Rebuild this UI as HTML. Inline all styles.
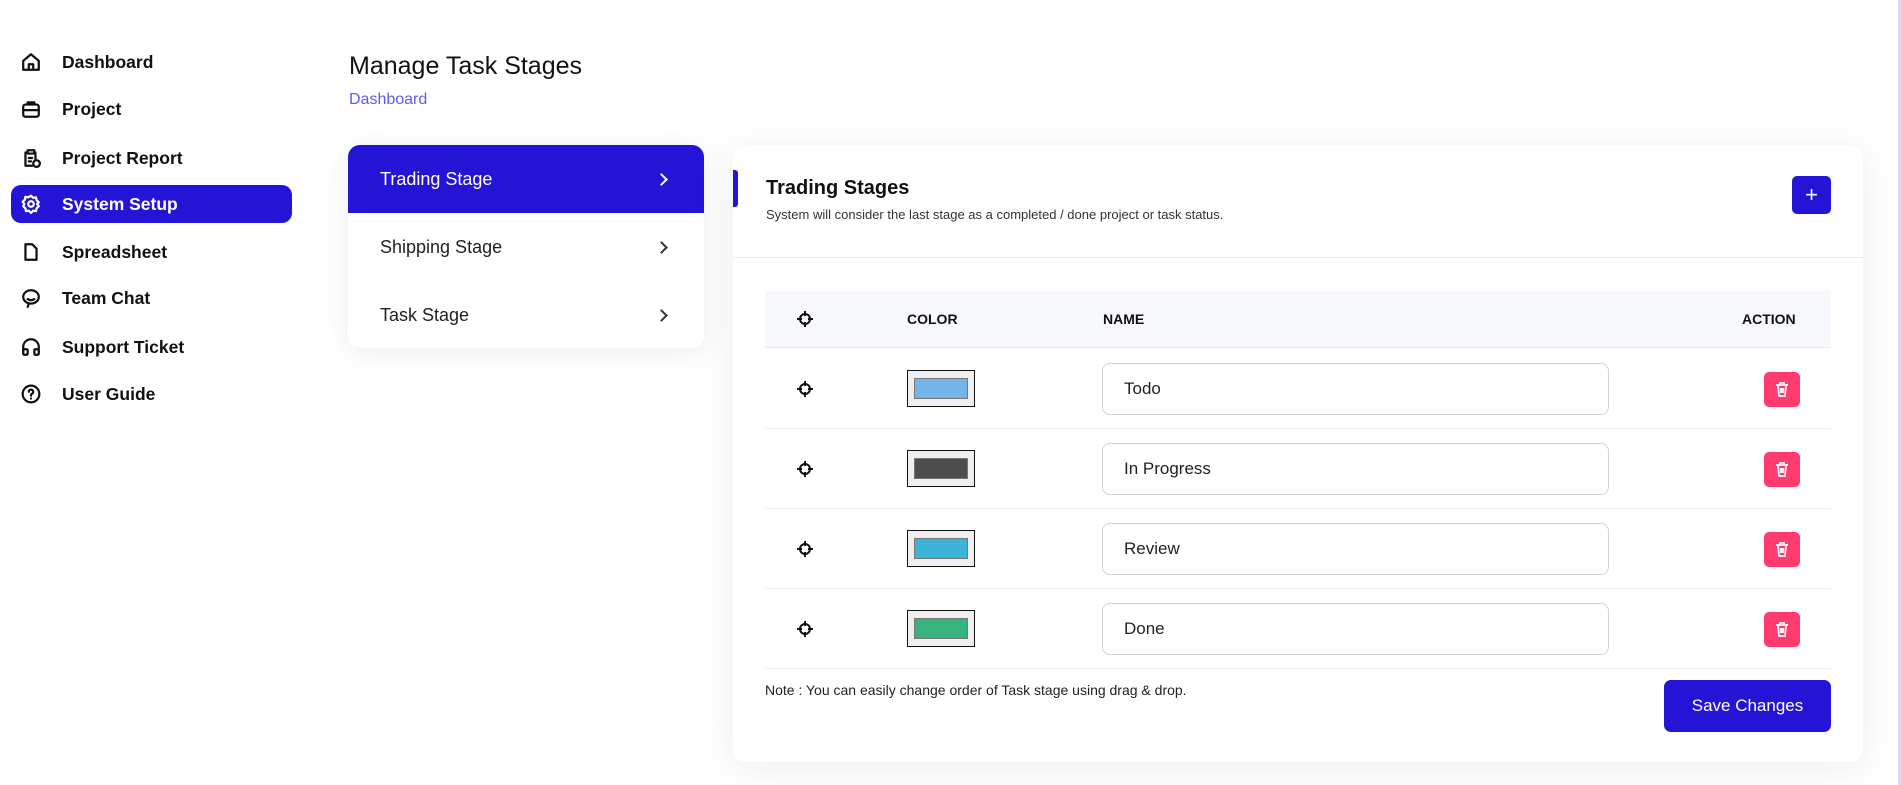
<!DOCTYPE html>
<html><head><meta charset="utf-8"><style>
*{box-sizing:border-box;margin:0;padding:0}
body{width:1901px;height:785px;background:#fff;font-family:"Liberation Sans",sans-serif;color:#111;position:relative;overflow:hidden}
.side .it{position:absolute;left:11px;width:281px;height:38px;border-radius:10px;display:flex;align-items:center;font-size:17.5px;font-weight:bold;color:#111}
.side .it svg{position:absolute;left:10px;top:9px;width:20px;height:20px;fill:none;stroke:#111;stroke-width:2;stroke-linecap:round;stroke-linejoin:round}
.side .it span{position:absolute;left:51px}
.side .act{background:#2314d6;color:#fff}
.side .act svg{stroke:#fff}
h1{position:absolute;left:349px;top:52px;font-size:25px;font-weight:normal;color:#111}
.bc{position:absolute;left:349px;top:91px;font-size:16px;color:#5c5cf0}
.menu{position:absolute;left:348px;top:145px;width:356px;height:203px;background:#fff;border-radius:12px;box-shadow:0 4px 30px rgba(30,30,80,.08);overflow:hidden}
.menu div{height:68px;display:flex;align-items:center;padding-left:32px;font-size:18px;color:#222;position:relative}
.menu div:after{content:"";position:absolute;right:38px;top:30px;width:7px;height:7px;border-right:2px solid #333;border-top:2px solid #333;transform:rotate(45deg)}
.menu .a{background:#2314d6;color:#fff}
.menu .a:after{border-color:#fff}
.card{position:absolute;left:733px;top:145px;width:1130px;height:617px;background:#fff;border-radius:12px;box-shadow:0 6px 40px rgba(30,30,80,.08)}
.ind{position:absolute;left:0;top:25px;width:5px;height:37px;background:#2314d6;border-radius:0 3px 3px 0}
.ct{position:absolute;left:33px;top:32px;font-size:20px;font-weight:bold}
.cs{position:absolute;left:33px;top:62px;font-size:13px;color:#333}
.plus{position:absolute;left:1059px;top:31px;width:39px;height:38px;background:#2314d6;border-radius:5px;color:#fff;font-size:22px;text-align:center;line-height:38px}
.hr{position:absolute;left:0;right:0;top:112px;border-top:1px solid #eaeaee}
.th{position:absolute;left:32px;width:1066px;top:145px;height:58px;background:#f6f8fc;border-bottom:1px solid #e6e8ee;font-size:14px;font-weight:bold}
.th span{position:absolute;top:21px}
.row{position:absolute;left:32px;width:1066px;height:80px;border-bottom:1px solid #eaeaee}
.cross{position:absolute;width:16px;height:16px}
.sw{position:absolute;left:142px;width:68px;height:37px;border:1px solid #111;background:#efefef}
.sw i{position:absolute;left:6px;top:7px;right:6px;bottom:7px;border:1px solid #777}
.inp{position:absolute;left:337px;width:507px;height:52px;border:1px solid #cfd2da;border-radius:8px;font-size:17px;color:#222;padding-left:21px;line-height:50px}
.del{position:absolute;left:999px;width:36px;height:35px;background:#ff3b6f;border-radius:5px}
.del svg{position:absolute;left:11px;top:10px}
.note{position:absolute;left:32px;top:537px;font-size:14px;color:#222}
.save{position:absolute;left:931px;top:535px;width:167px;height:52px;background:#2314d6;border-radius:7px;color:#fff;font-size:17px;text-align:center;line-height:52px}
.sb{position:absolute;right:0;top:0;width:3px;height:785px;background:#d8d8f4}
</style></head><body>
<div class="side">
<div class="it" style="top:43px"><svg viewBox="0 0 18 18"><path d="M2 8L9 2l7 6v8H2z"/><path d="M7 16v-5h4v5"/></svg><span>Dashboard</span></div>
<div class="it" style="top:90px"><svg viewBox="0 0 18 18"><rect x="2" y="5" width="14" height="11" rx="2"/><path d="M6 5V3h6v2M2 10h14"/></svg><span>Project</span></div>
<div class="it" style="top:139px"><svg viewBox="0 0 18 18"><path d="M12 4h1v6M6 4H4v12h6"/><rect x="6" y="2" width="6" height="3"/><path d="M7 9h3M7 12h2"/><circle cx="14" cy="14" r="3"/></svg><span>Project Report</span></div>
<div class="it act" style="top:185px"><svg viewBox="0 0 18 18"><circle cx="9" cy="9" r="2.5"/><path d="M9 1.5l2 2 2.5-.5.5 2.5 2 2-1.5 1.5 1.5 2-2 2-.5 2.5-2.5-.5-2 2-2-2-2.5.5-.5-2.5-2-2L3 9 1.5 7l2-2 .5-2.5 2.5.5z"/></svg><span>System Setup</span></div>
<div class="it" style="top:233px"><svg viewBox="0 0 18 18"><path d="M4 2h6l4 4v10H4z"/></svg><span>Spreadsheet</span></div>
<div class="it" style="top:279px"><svg viewBox="0 0 18 18"><ellipse cx="9" cy="8" rx="7" ry="6"/><path d="M6 10q3 2 6 0M7 14l-1 3"/></svg><span>Team Chat</span></div>
<div class="it" style="top:328px"><svg viewBox="0 0 18 18"><path d="M2 13V9a7 7 0 0 1 14 0v4"/><rect x="2" y="11" width="4" height="5" rx="1"/><rect x="12" y="11" width="4" height="5" rx="1"/></svg><span>Support Ticket</span></div>
<div class="it" style="top:375px"><svg viewBox="0 0 18 18"><circle cx="9" cy="9" r="7.5"/><path d="M7 7a2 2 0 1 1 2.5 2c-.5.3-.5.8-.5 1.5M9 13v.1"/></svg><span>User Guide</span></div>
</div>
<h1>Manage Task Stages</h1>
<div class="bc">Dashboard</div>
<div class="menu"><div class="a">Trading Stage</div><div>Shipping Stage</div><div>Task Stage</div></div>
<div class="card">
<div class="ind"></div>
<div class="ct">Trading Stages</div>
<div class="cs">System will consider the last stage as a completed / done project or task status.</div>
<div class="plus">+</div>
<div class="hr"></div>
<div class="th"><svg class="cross" style="left:32px;top:21px" viewBox="0 0 16 16" fill="none" stroke="#111" stroke-width="2"><circle cx="8" cy="8" r="5"/><path d="M8 0v5M8 11v5M0 8h5M11 8h5"/></svg><span style="left:142px">COLOR</span><span style="left:338px">NAME</span><span style="left:977px">ACTION</span></div>

<div class="row" style="top:204px"><svg class="cross" style="left:32px;top:32px" viewBox="0 0 16 16" fill="none" stroke="#111" stroke-width="2"><circle cx="8" cy="8" r="5"/><path d="M8 0v5M8 11v5M0 8h5M11 8h5"/></svg><div class="sw" style="top:21px"><i style="background:#74b4e8"></i></div><div class="inp" style="top:14px">Todo</div><div class="del" style="top:23px"><svg width="14" height="15" viewBox="0 0 14 15" fill="none" stroke="#fff" stroke-width="1.8"><path d="M1 3h12M5 3V1h4v2M3 3l1 11h6l1-11M6 6v5M8 6v5"/></svg></div></div>
<div class="row" style="top:284px"><svg class="cross" style="left:32px;top:32px" viewBox="0 0 16 16" fill="none" stroke="#111" stroke-width="2"><circle cx="8" cy="8" r="5"/><path d="M8 0v5M8 11v5M0 8h5M11 8h5"/></svg><div class="sw" style="top:21px"><i style="background:#4d4d4d"></i></div><div class="inp" style="top:14px">In Progress</div><div class="del" style="top:23px"><svg width="14" height="15" viewBox="0 0 14 15" fill="none" stroke="#fff" stroke-width="1.8"><path d="M1 3h12M5 3V1h4v2M3 3l1 11h6l1-11M6 6v5M8 6v5"/></svg></div></div>
<div class="row" style="top:364px"><svg class="cross" style="left:32px;top:32px" viewBox="0 0 16 16" fill="none" stroke="#111" stroke-width="2"><circle cx="8" cy="8" r="5"/><path d="M8 0v5M8 11v5M0 8h5M11 8h5"/></svg><div class="sw" style="top:21px"><i style="background:#3cb4d8"></i></div><div class="inp" style="top:14px">Review</div><div class="del" style="top:23px"><svg width="14" height="15" viewBox="0 0 14 15" fill="none" stroke="#fff" stroke-width="1.8"><path d="M1 3h12M5 3V1h4v2M3 3l1 11h6l1-11M6 6v5M8 6v5"/></svg></div></div>
<div class="row" style="top:444px"><svg class="cross" style="left:32px;top:32px" viewBox="0 0 16 16" fill="none" stroke="#111" stroke-width="2"><circle cx="8" cy="8" r="5"/><path d="M8 0v5M8 11v5M0 8h5M11 8h5"/></svg><div class="sw" style="top:21px"><i style="background:#37b37e"></i></div><div class="inp" style="top:14px">Done</div><div class="del" style="top:23px"><svg width="14" height="15" viewBox="0 0 14 15" fill="none" stroke="#fff" stroke-width="1.8"><path d="M1 3h12M5 3V1h4v2M3 3l1 11h6l1-11M6 6v5M8 6v5"/></svg></div></div>

<div class="note">Note : You can easily change order of Task stage using drag &amp; drop.</div>
<div class="save">Save Changes</div>
</div>
<div class="sb"></div>
</body></html>
